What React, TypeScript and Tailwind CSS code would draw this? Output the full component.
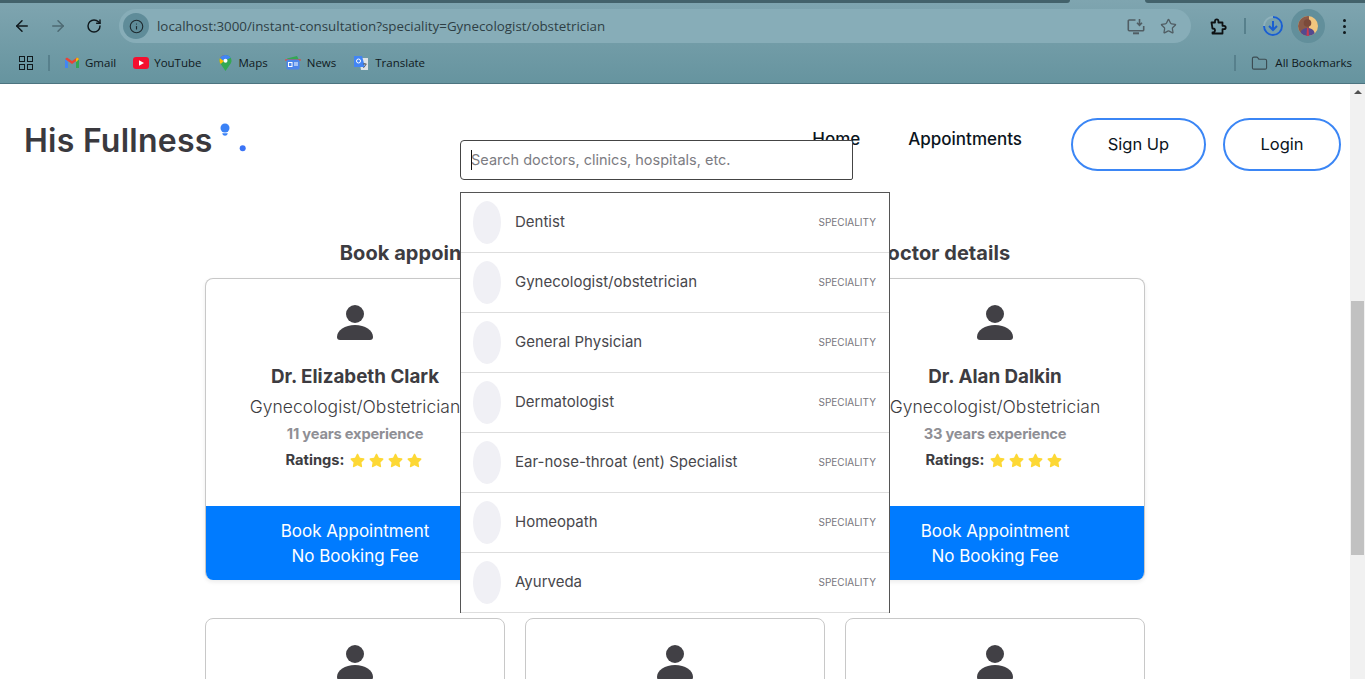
import { ArrowLeft, ArrowRight, RotateCw, Info, Star, Folder } from "lucide-react";
import { FaStar } from "react-icons/fa";

const bookmarks = [
  { name: "Gmail", icon: <GmailIcon />, gap: "gap-[5px]" },
  { name: "YouTube", icon: <YouTubeIcon />, gap: "gap-[5px]" },
  { name: "Maps", icon: <MapsIcon />, gap: "gap-[7px]" },
  { name: "News", icon: <NewsIcon />, gap: "gap-[6px]" },
  { name: "Translate", icon: <TranslateIcon />, gap: "gap-[6px]" },
];

const specialities = [
  "Dentist",
  "Gynecologist/obstetrician",
  "General Physician",
  "Dermatologist",
  "Ear-nose-throat (ent) Specialist",
  "Homeopath",
  "Ayurveda",
];

function GmailIcon() {
  return (
    <svg width="16" height="12" viewBox="0 0 16 12">
      <path d="M1 2v9h3V5z" fill="#4285f4" />
      <path d="M15 2v9h-3V5z" fill="#34a853" />
      <path d="M1 2l7 5 7-5-2-1.500-5 3.500-5-3.500z" fill="#ea4335" />
      <path d="M13 .5L15 2l-3 3V2z" fill="#fbbc04" />
    </svg>
  );
}

function YouTubeIcon() {
  return (
    <svg width="16" height="12" viewBox="0 0 16 12">
      <rect width="16" height="12" rx="3" fill="#f40f2f" />
      <path d="M6 3.200v5.600L11 6z" fill="#fff" />
    </svg>
  );
}

function MapsIcon() {
  return (
    <svg width="13" height="16" viewBox="0 0 13 16">
      <path d="M6.500 0C3 0 .5 2.500.5 5.700c0 1.300.5 2.400 1.200 3.400L6.500 16l4.800-6.900c.7-1 1.200-2.100 1.200-3.400C12.500 2.500 10 0 6.500 0z" fill="#34a853" />
      <path d="M1 3l4 3-3.300 3.100C1 8.100.5 7 .5 5.700.5 4.700.7 3.800 1 3z" fill="#fbbc04" />
      <path d="M2 1.800C3 .7 4.600 0 6.500 0L1 3z" fill="#ea4335" />
      <path d="M6.500 0c2.200 0 4.200 1.100 5.200 2.800L5 6 1 3C2 1.100 4 0 6.500 0z" fill="#4285f4" />
      <circle cx="6.500" cy="5.700" r="2" fill="#fff" />
    </svg>
  );
}

function NewsIcon() {
  return (
    <svg width="16" height="14" viewBox="0 0 16 14">
      <path d="M2 2.500 12 0l2 4H3z" fill="#34a853" />
      <rect x="0" y="3" width="16" height="2" rx="1" fill="#ea4335" opacity="0.7" />
      <rect x="1.500" y="3.500" width="13" height="10" rx="1.500" fill="#4b84ea" />
      <rect x="3.500" y="6.500" width="3.500" height="4" fill="none" stroke="#fff" strokeWidth="1" />
      <rect x="9" y="6.500" width="4" height="1" fill="#fff" />
      <rect x="9" y="8.500" width="4" height="1" fill="#fff" />
    </svg>
  );
}

function TranslateIcon() {
  return (
    <svg width="16" height="16" viewBox="0 0 16 16">
      <path d="M6 3h9v12H8z" fill="#dfe3e6" />
      <path d="M1 1h8l3 11H1z" fill="#4285f4" />
      <circle cx="5.500" cy="6" r="2" fill="none" stroke="#fff" strokeWidth="1" />
      <path d="M10 9h3.500M11.800 8v1M13 9c-.4 2-1.500 3-2.800 3.600" fill="none" stroke="#555" strokeWidth="0.900" />
    </svg>
  );
}

function ScreenDownload() {
  return (
    <svg width="18" height="17" viewBox="0 0 18 17" fill="none" stroke="#505d63" strokeWidth="1.600">
      <path d="M8.500 2H2.300a1 1 0 0 0-1 1v8.700a1 1 0 0 0 1 1h13.400a1 1 0 0 0 1-1V8" />
      <path d="M6 15.300h6" strokeWidth="2" />
      <path d="M12.500 1v6M10 4.800l2.500 2.500L15 4.800" />
    </svg>
  );
}

function ExtensionIcon() {
  return (
    <svg width="17" height="17" viewBox="0 0 17 17" fill="none" stroke="#0d1113" strokeWidth="1.800" strokeLinejoin="round">
      <path d="M1.500 4.500H5V3a1.700 1.700 0 0 1 3.400 0v1.500h4.100v3.300H14a1.700 1.700 0 0 1 0 3.400h-1.500v4.300H2.500v-1h.5a2 2 0 0 0 0-4h-.5z" />
    </svg>
  );
}

function DownloadRing() {
  return (
    <svg width="22" height="22" viewBox="0 0 22 22" fill="none">
      <circle cx="11" cy="11" r="9" stroke="#8fb1bb" strokeWidth="2" />
      <path d="M11 2a9 9 0 1 1-9 9" stroke="#1a5fd0" strokeWidth="2" />
      <path d="M11 6v9M7 11l4 4 4-4" stroke="#1a5fd0" strokeWidth="2" />
    </svg>
  );
}

function Avatar() {
  return (
    <svg width="20" height="20" viewBox="0 0 20 20">
      <defs>
        <clipPath id="avatar-clip">
          <circle cx="10" cy="10" r="10" />
        </clipPath>
      </defs>
      <g clipPath="url(#avatar-clip)">
        <rect width="20" height="20" fill="#f2c67e" />
        <rect width="11" height="20" fill="#8a5a48" />
        <circle cx="9.500" cy="7" r="3.800" fill="#7b4a3a" />
        <path d="M2 20c0-6 3.500-8 7.500-8s7.500 2 7.500 8z" fill="#544a8e" />
        <path d="M9 12h1.500l.5 8H8.500z" fill="#c93a50" />
      </g>
    </svg>
  );
}

function LogoMark() {
  return (
    <svg width="30" height="32" viewBox="0 0 30 32" className="ml-[6px] mt-[-3px]">
      <circle cx="6" cy="5" r="4.500" fill="#3b82f6" />
      <path d="M3.200 10.300h5.600c-.5 1.800-1.500 2.500-2.800 2.500s-2.300-.7-2.800-2.500z" fill="#3b82f6" />
      <circle cx="23.700" cy="25.300" r="3" fill="#3b74f6" />
    </svg>
  );
}

function PersonIcon() {
  return (
    <svg width="36" height="36" viewBox="0 0 36 36" className="shrink-0">
      <circle cx="18" cy="9" r="9" fill="#414045" />
      <path d="M0 32c0-7 8-12 18-12s18 5 18 12c0 2-1 3-3 3H3c-2 0-3-1-3-3z" fill="#414045" />
    </svg>
  );
}

function DoctorCard({ name, years }: { name: string; years: number }) {
  return (
    <div className="h-[302px] rounded-lg border border-b-0 border-[#c8c8c8] bg-white shadow-[0_2px_4px_rgba(0,0,0,0.08)] flex flex-col items-center pt-[26px] overflow-hidden">
      <PersonIcon />
      <div className="mt-[24px] text-[18.800px] leading-[24px] font-bold text-[#3d3c41]">{name}</div>
      <div className="mt-[6px] text-[17.500px] leading-[24px] font-light text-[#3d3c41] whitespace-nowrap">Gynecologist/Obstetrician</div>
      <div className="mt-[5px] text-[14.700px] leading-[20px] font-bold text-[#8f8f95] tracking-[-0.2px]">{years} years experience</div>
      <div className="mt-[6px] mr-[3px] flex items-center gap-[5px] text-[14.700px] leading-[20px] font-bold text-[#3d3c41]">
        <span>Ratings:</span>
        <div className="flex gap-[4px] text-[#fdd835] text-[15px]">
          <FaStar />
          <FaStar />
          <FaStar />
          <FaStar />
        </div>
      </div>
      <div className="mt-auto w-full h-[74px] pt-[1px] bg-[#007bff] text-white text-[17px] leading-[25px] flex flex-col items-center justify-center">
        <span>Book Appointment</span>
        <span>No Booking Fee</span>
      </div>
    </div>
  );
}

function EmptyCard() {
  return (
    <div className="h-[302px] rounded-lg border border-[#c8c8c8] bg-white flex flex-col items-center pt-[26px]">
      <PersonIcon />
    </div>
  );
}

export default function App() {
  return (
    <div className="h-[679px] w-full overflow-hidden flex flex-col font-['Inter','Liberation_Sans',sans-serif]">
      <header className="h-[84px] shrink-0 flex flex-col border-b border-[#4c7480] bg-gradient-to-b from-[#7fa5b0] to-[#66949f] font-['Open_Sans','Liberation_Sans',sans-serif]">
        <div className="h-[3px] flex shrink-0">
          <div className="flex-1 bg-[#43626b] rounded-br-[4px]" />
          <div className="w-[75px]" />
          <div className="w-[220px] bg-[#43626b] rounded-bl-[4px]" />
        </div>
        <div className="h-[40px] shrink-0 flex items-center pl-[13px] pr-[12px] pt-[6px]">
          <ArrowLeft size={18} strokeWidth={2} className="text-[#10191d]" />
          <ArrowRight size={18} strokeWidth={2} className="text-[#4e6a73] ml-[18px]" />
          <RotateCw size={16} strokeWidth={2.2} className="text-[#10191d] ml-[19px]" />
          <div className="ml-[17px] w-[1072px] h-[34px] rounded-full bg-[#87adb8] flex items-center pl-[4px] pr-[14px]">
            <div className="w-[26px] h-[26px] rounded-full bg-[#5f8c99] flex items-center justify-center">
              <Info size={15} strokeWidth={1.800} className="text-[#1e2a2f]" />
            </div>
            <span className="ml-[8px] text-[13.350px] text-[#2e3f45] whitespace-nowrap">localhost:3000/instant-consultation?speciality=Gynecologist/obstetrician</span>
            <div className="ml-auto flex items-center gap-[15px]">
              <ScreenDownload />
              <Star size={17} strokeWidth={1.800} className="text-[#505d63]" />
            </div>
          </div>
          <div className="ml-[19px]"><ExtensionIcon /></div>
          <div className="ml-[17px] w-[2px] h-[16px] bg-[#57808c]" />
          <div className="ml-[16px]"><DownloadRing /></div>
          <div className="ml-[7px] w-[34px] h-[34px] rounded-full bg-[#628f9b] flex items-center justify-center"><Avatar /></div>
          <div className="ml-[18px] flex flex-col gap-[3px]">
            <span className="w-[3px] h-[3px] rounded-full bg-[#10191d]" />
            <span className="w-[3px] h-[3px] rounded-full bg-[#10191d]" />
            <span className="w-[3px] h-[3px] rounded-full bg-[#10191d]" />
          </div>
        </div>
        <div className="flex-1 flex items-center pl-[19px] pr-[13px] text-[11.500px] text-[#10191d]">
          <div className="grid grid-cols-2 gap-[2px]">
            <span className="w-[6px] h-[6px] border-[1.500px] border-[#10191d]" />
            <span className="w-[6px] h-[6px] border-[1.500px] border-[#10191d]" />
            <span className="w-[6px] h-[6px] border-[1.500px] border-[#10191d]" />
            <span className="w-[6px] h-[6px] border-[1.500px] border-[#10191d]" />
          </div>
          <div className="ml-[15px] mr-[14px] w-[2px] h-[16px] bg-[#57808c]" />
          <div className="flex items-center gap-[17px]">
            {bookmarks.map((b) => (
              <div key={b.name} className={`flex items-center ${b.gap}`}>
                {b.icon}
                <span>{b.name}</span>
              </div>
            ))}
          </div>
          <div className="ml-auto w-[2px] h-[16px] bg-[#57808c]" />
          <Folder size={17} strokeWidth={1.600} className="ml-[15px] text-[#3c4c52]" />
          <span className="ml-[7px]">All Bookmarks</span>
        </div>
      </header>

      <div className="flex-1 min-h-0 flex">
        <main className="flex-1 min-w-0 relative overflow-hidden bg-white">
          <nav className="h-[112px] flex items-start pl-[24px] pr-[9px] pt-[34px]">
            <div className="flex items-center">
              <span className="mt-[1px] text-[32px] leading-[44px] font-semibold text-[#3a393e] tracking-[0.250px]">His Fullness</span>
              <LogoMark />
            </div>
            <div className="ml-auto flex items-start">
              <span className="text-[17px] leading-[24px] font-medium text-[#0b1420] mt-[9px]">Home</span>
              <span className="ml-[48px] text-[17px] leading-[24px] font-medium text-[#0b1420] mt-[9px]">Appointments</span>
              <button className="ml-[49px] w-[135px] h-[53px] rounded-full border-2 border-[#3b86f5] bg-white text-[16.500px] text-[#0b1420]">Sign Up</button>
              <button className="ml-[17px] w-[118px] h-[53px] rounded-full border-2 border-[#3b86f5] bg-white text-[16.500px] text-[#0b1420]">Login</button>
            </div>
          </nav>

          <h2 className="mt-[44px] text-center text-[20px] leading-[26px] font-bold text-[#3d3c41] whitespace-nowrap tracking-[0.050px]">
            Book appointments with minimum wait-time &amp; verified doctor details
          </h2>

          <div className="mt-[12px] mx-auto w-[940px] grid grid-cols-3 gap-x-[20px] gap-y-[38px]">
            <DoctorCard name="Dr. Elizabeth Clark" years={11} />
            <EmptyCard />
            <DoctorCard name="Dr. Alan Dalkin" years={33} />
            <EmptyCard />
            <EmptyCard />
            <EmptyCard />
          </div>

          <div className="absolute left-[460px] top-[56px] w-[393px] h-[40px] rounded-l-[4px] rounded-r-[2px] border border-[#444] bg-white flex items-center pl-[10px] text-[14.500px] text-[#7c7c82]">
            <span className="absolute left-[10px] top-[9px] w-px h-[20px] bg-[#111]" />
            Search doctors, clinics, hospitals, etc.
          </div>

          <ul className="absolute left-[460px] top-[108px] w-[430px] h-[421px] border-x border-t border-[#555] bg-white">
            {specialities.map((s) => (
              <li key={s} className="h-[60px] border-b border-[#dedede] flex items-center pl-[12px] pr-[13px]">
                <span className="w-[28px] h-[43px] rounded-[50%] bg-[#f0f0f5] shrink-0" />
                <span className="ml-[14px] text-[15px] leading-[20px] pb-[1px] text-[#48474c]">{s}</span>
                <span className="ml-auto text-[10px] text-[#77767c]">SPECIALITY</span>
              </li>
            ))}
          </ul>
        </main>

        <aside className="w-[15px] shrink-0 bg-[#f1f1f1] flex flex-col items-center">
          <div className="mt-[6px] w-0 h-0 border-x-[4px] border-x-transparent border-b-[4px] border-b-[#505050]" />
          <div className="mt-[207px] w-[13px] h-[254px] bg-[#c1c1c1]" />
        </aside>
      </div>
    </div>
  );
}
